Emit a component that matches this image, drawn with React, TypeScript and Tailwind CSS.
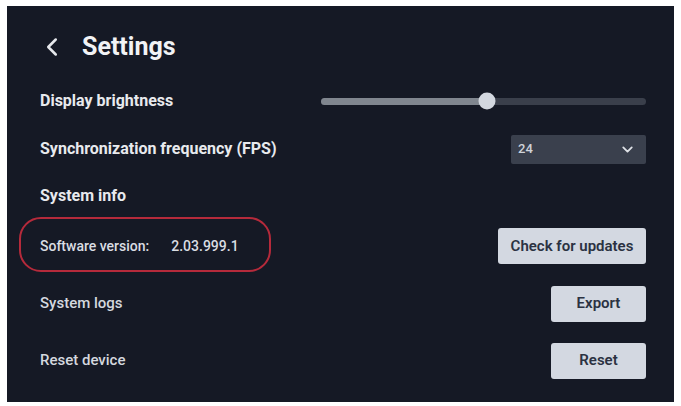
import { ChevronLeft, ChevronDown } from 'lucide-react'

const font = { fontFamily: 'Roboto, "Noto Sans", sans-serif' }

function Label({ children, bold = true }: { children: React.ReactNode; bold?: boolean }) {
  return (
    <span className={bold ? 'text-[16px] font-bold text-[#e8eaee]' : 'text-[15px] font-medium text-[#d4d8df]'}>
      {children}
    </span>
  )
}

function LightButton({ children, width }: { children: React.ReactNode; width: string }) {
  return (
    <button className={`${width} h-[36px] rounded-[3px] bg-[#d3d8e1] text-[15px] font-semibold text-[#2b3242]`}>
      {children}
    </button>
  )
}

export default function App() {
  const brightness = 51

  return (
    <div className="w-[681px] h-[406px] bg-white pl-[7px] pt-[6px]" style={font}>
      <div className="w-[667px] h-[396px] bg-[#151925] pt-[20px] pl-[33px] pr-[28px] flex flex-col">
        {/* header */}
        <div className="h-[42px] flex items-center">
          <ChevronLeft size={30} strokeWidth={2} className="text-[#e6e8ec] -ml-[3px]" />
          <h1 className="ml-[15px] text-[25px] font-bold text-[#f2f3f5]">Settings</h1>
        </div>

        <div className="h-[66px] flex items-center justify-between">
          <Label>Display brightness</Label>
          <div className="relative w-[325px] h-[7px] rounded-full bg-[#3a3f4b]">
            <div className="h-full rounded-full bg-[#80868f]" style={{ width: `${brightness}%` }} />
            <div
              className="absolute top-1/2 w-[17px] h-[17px] -translate-x-1/2 -translate-y-1/2 rounded-full bg-[#d3d8e0]"
              style={{ left: `${brightness}%` }}
            />
          </div>
        </div>

        <div className="h-[30px] flex items-center justify-between">
          <Label>Synchronization frequency (FPS)</Label>
          <div className="w-[135px] h-[29px] bg-[#3a404d] rounded-[2px] flex items-center justify-between pl-[7px] pr-[10px]">
            <span className="text-[13px] font-medium text-[#cfd3da]">24</span>
            <ChevronDown size={17} strokeWidth={2.5} className="text-[#dfe2e7]" />
          </div>
        </div>

        <div className="h-[63px] flex items-center">
          <Label>System info</Label>
        </div>

        <div className="relative h-[38px] flex items-center justify-between">
          <div className="absolute -left-[21px] -top-[10px] w-[252px] h-[55px] rounded-[22px] border-2 border-[#b52a3b]" />
          <span className="text-[14px] font-medium text-[#dadde3]">
            Software version:<span className="ml-[22px]">2.03.999.1</span>
          </span>
          <LightButton width="w-[148px]">Check for updates</LightButton>
        </div>

        <div className="mt-[20px] h-[37px] flex items-center justify-between">
          <Label bold={false}>System logs</Label>
          <LightButton width="w-[95px]">Export</LightButton>
        </div>

        <div className="mt-[20px] h-[37px] flex items-center justify-between">
          <Label bold={false}>Reset device</Label>
          <LightButton width="w-[95px]">Reset</LightButton>
        </div>
      </div>
    </div>
  )
}
